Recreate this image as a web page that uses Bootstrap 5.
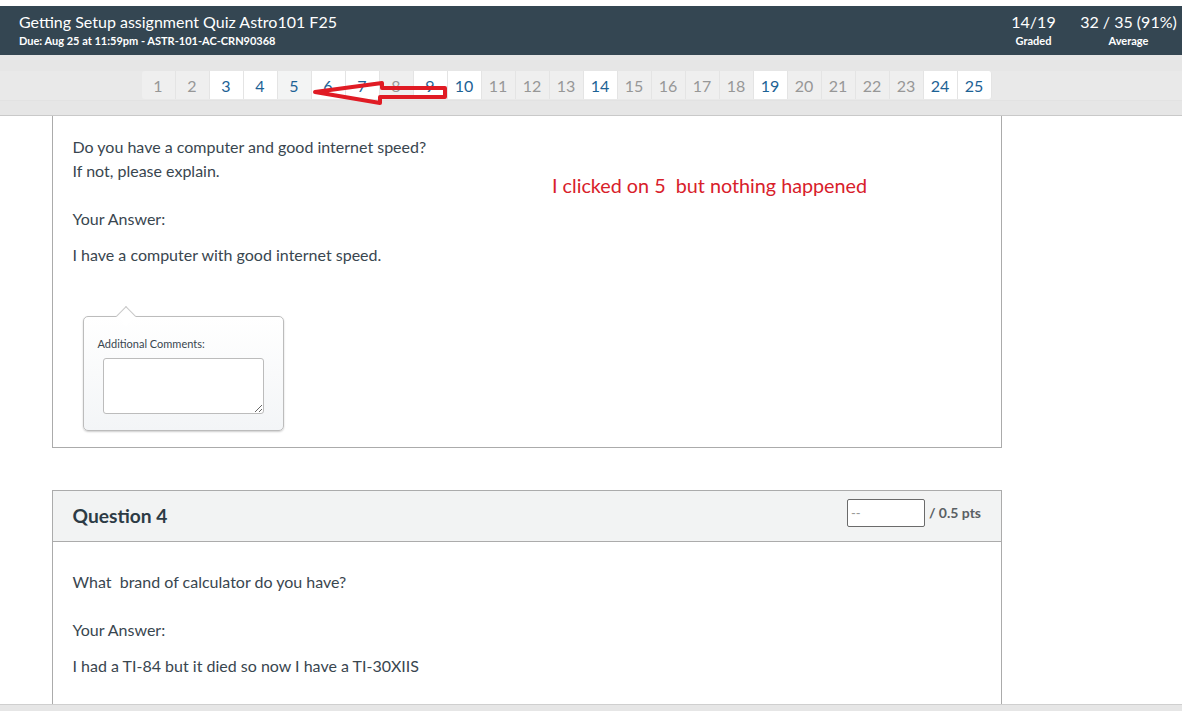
<!DOCTYPE html>
<html lang="en">
<head>
<meta charset="utf-8">
<title>SpeedGrader</title>
<link href="https://cdn.jsdelivr.net/npm/bootstrap@5.3.0/dist/css/bootstrap.min.css" rel="stylesheet">
<style>
html, body { height: 711px; overflow: hidden; }
body { font-family: Lato, "Liberation Sans", sans-serif; color: #39464f; background: #fff; font-size: 16px; position: relative; }
.topgap { height: 6px; background: #fff; }
.quizhead { height: 49px; background: #344652; color: #fff; padding: 4px 5px 0 19px; }
.quiztitle { font-size: 16px; line-height: 24px; }
.quizsub { font-size: 11px; line-height: 14px; font-weight: 700; }
.statbox { text-align: center; }
.stat1 { width: 45px; margin-right: 24px; }
.stat2 { width: 97px; }
.navband { height: 61px; background: #e6e6e6; border-bottom: 1px solid #c9c9c9; padding-top: 16px; }
.pagerwrap { height: 30px; background: #e9e9e9; border-bottom: 1px solid #e2e2e2; padding-left: 141.5px; }
.pagerwrap .pagination { margin: 0; --bs-pagination-border-width: 0; --bs-pagination-border-radius: 3px; }
.pagerwrap .page-item .page-link, .pagerwrap .page-item:not(:first-child) .page-link { width: 34px; height: 28px; padding: 0; text-align: center; font-size: 16px; line-height: 30px; border: 0; border-right: 1px solid #e4e4e4; background: #fff; color: #1d6295; margin: 0; }
.pagerwrap .page-item.idle .page-link, .pagerwrap .page-item.idle:not(:first-child) .page-link { background: #efefef; color: #979797; }
.pagerwrap .page-item.hovered:not(:first-child) .page-link { background: #f3f4f4; }
.sheet { width: 950px; margin-left: 52px; background: #fff; border: 1px solid #ababab; }
.qone { border-top: 0; height: 332px; padding: 19px 20px 0 19.5px; }
.qtext { line-height: 24px; margin: 0; }
.q1ans { margin-top: 12px; }
.commentbox { position: relative; width: 201px; height: 115px; margin: 49px 0 0 10px; border: 1px solid #bcbcbc; border-radius: 5px; background: linear-gradient(#fff, #f3f5f7); box-shadow: 0 1px 2px rgba(0,0,0,.2); padding: 19px 14px 0; }
.commentbox::before { content: ""; position: absolute; left: 35px; top: -8px; width: 14px; height: 14px; background: #fff; border-left: 1px solid #c8c8c8; border-top: 1px solid #c8c8c8; transform: rotate(45deg); }
.commentlabel { font-size: 11px; line-height: 16px; display: block; position: relative; }
.commentarea { display: block; width: 161px; height: 56px; margin: 6px 0 0 5px; border: 1px solid #bcbcbc; border-radius: 3px; background: #fff; }
.qtwo { margin-top: 42px; height: 221px; }
.qtwohead { height: 51px; background: #f2f3f3; border-bottom: 1px solid #ababab; padding: 0 20px 0 19.5px; }
.qtwotitle { font-size: 19.2px; font-weight: 700; margin: 0; line-height: 50px; color: #2d3b45; }
.ptsinput { width: 78px; height: 28px; border: 1px solid #6b6b6b; border-radius: 2px; font-size: 13px; padding: 0 3px; color: #888; margin-top: 8px; }
.ptsinput::placeholder { color: #999; }
.ptstext { font-size: 14px; font-weight: 700; color: #5a5f63; margin: 13px 0 0 4px; line-height: 18px; white-space: nowrap; }
.qtwobody { padding: 28px 20px 0 19.5px; }
.footstrip { position: absolute; left: 0; right: 0; top: 704px; height: 7px; background: #e6e6e6; border-top: 1px solid #cfcfcf; }
.annot { position: absolute; left: 552px; top: 174px; font-family: Lato, "Liberation Sans", sans-serif; font-size: 19.75px; line-height: 24px; color: #d8202a; white-space: nowrap; margin: 0; }
.arrowmark { position: absolute; left: 0; top: 0; pointer-events: none; }
</style>
</head>
<body>
<div class="topgap"></div>
<header class="quizhead d-flex justify-content-between">
  <div>
    <div class="quiztitle">Getting Setup assignment Quiz Astro101 F25</div>
    <div class="quizsub">Due: Aug 25 at 11:59pm - ASTR-101-AC-CRN90368</div>
  </div>
  <div class="d-flex">
    <div class="statbox stat1"><div class="quiztitle">14/19</div><div class="quizsub">Graded</div></div>
    <div class="statbox stat2"><div class="quiztitle">32 / 35 (91%)</div><div class="quizsub">Average</div></div>
  </div>
</header>
<nav class="navband">
  <div class="pagerwrap">
    <ul class="pagination">
      <li class="page-item idle"><a class="page-link" href="#">1</a></li>
      <li class="page-item idle"><a class="page-link" href="#">2</a></li>
      <li class="page-item"><a class="page-link" href="#">3</a></li>
      <li class="page-item"><a class="page-link" href="#">4</a></li>
      <li class="page-item hovered"><a class="page-link" href="#">5</a></li>
      <li class="page-item"><a class="page-link" href="#">6</a></li>
      <li class="page-item"><a class="page-link" href="#">7</a></li>
      <li class="page-item idle"><a class="page-link" href="#">8</a></li>
      <li class="page-item"><a class="page-link" href="#">9</a></li>
      <li class="page-item"><a class="page-link" href="#">10</a></li>
      <li class="page-item idle"><a class="page-link" href="#">11</a></li>
      <li class="page-item idle"><a class="page-link" href="#">12</a></li>
      <li class="page-item idle"><a class="page-link" href="#">13</a></li>
      <li class="page-item"><a class="page-link" href="#">14</a></li>
      <li class="page-item idle"><a class="page-link" href="#">15</a></li>
      <li class="page-item idle"><a class="page-link" href="#">16</a></li>
      <li class="page-item idle"><a class="page-link" href="#">17</a></li>
      <li class="page-item idle"><a class="page-link" href="#">18</a></li>
      <li class="page-item"><a class="page-link" href="#">19</a></li>
      <li class="page-item idle"><a class="page-link" href="#">20</a></li>
      <li class="page-item idle"><a class="page-link" href="#">21</a></li>
      <li class="page-item idle"><a class="page-link" href="#">22</a></li>
      <li class="page-item idle"><a class="page-link" href="#">23</a></li>
      <li class="page-item"><a class="page-link" href="#">24</a></li>
      <li class="page-item"><a class="page-link" href="#">25</a></li>
    </ul>
  </div>
</nav>
<main>
  <section class="sheet qone">
    <p class="qtext">Do you have a computer and good internet speed?</p>
    <p class="qtext">If not, please explain.</p>
    <p class="qtext mt-4">Your Answer:</p>
    <p class="qtext q1ans">I have a computer with good internet speed.</p>
    <div class="commentbox">
      <label class="commentlabel" for="c1">Additional Comments:</label>
      <textarea class="commentarea" id="c1"></textarea>
    </div>
  </section>
  <section class="sheet qtwo">
    <div class="qtwohead d-flex justify-content-between">
      <h2 class="qtwotitle">Question 4</h2>
      <div class="d-flex">
        <input class="ptsinput" type="text" placeholder="--">
        <div class="ptstext">/ 0.5 pts</div>
      </div>
    </div>
    <div class="qtwobody">
      <p class="qtext">What&nbsp; brand of calculator do you have?</p>
      <p class="qtext mt-4">Your Answer:</p>
      <p class="qtext q1ans">I had a TI-84 but it died so now I have a TI-30XIIS</p>
    </div>
  </section>
</main>
<div class="footstrip"></div>
<p class="annot">I clicked on 5&nbsp; but nothing happened</p>
<svg class="arrowmark" width="1182" height="711" viewBox="0 0 1182 711" aria-hidden="true">
  <path d="M315 92 L382 83 L382 88 L445 88 L445 97 L380 97 L380 103 Z" fill="none" stroke="#e01b24" stroke-width="4" stroke-linejoin="round"/>
</svg>
</body>
</html>
